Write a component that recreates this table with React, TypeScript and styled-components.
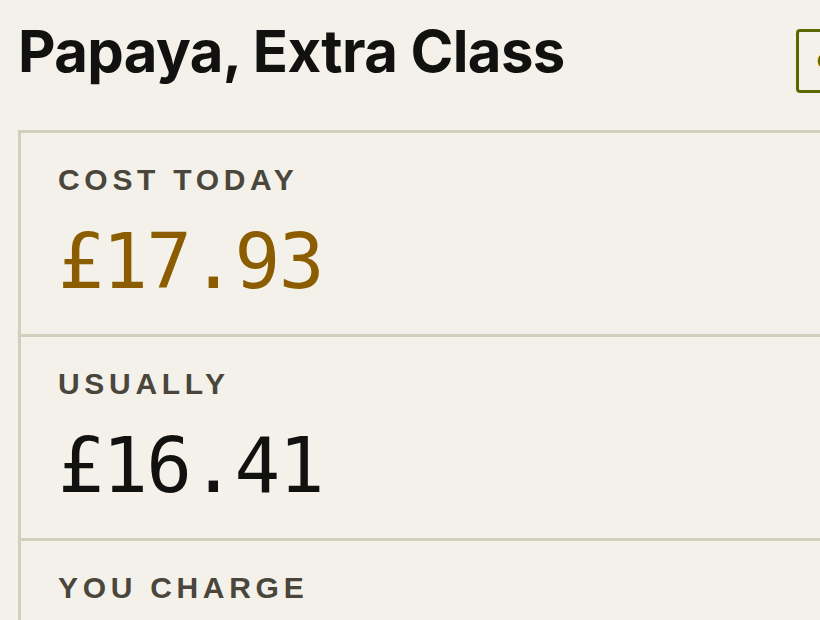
import React from "react";
import styled, { createGlobalStyle } from "styled-components";

const GlobalStyle = createGlobalStyle`
  html, body {
    margin: 0;
    padding: 0;
    background: #f3f1e9;
  }
  body {
    font-family: "Liberation Sans", Arial, sans-serif;
    overflow: hidden;
  }
`;

const Page = styled.div`
  width: 820px;
  height: 620px;
  overflow: hidden;
  box-sizing: border-box;
  padding: 19px 0 0 18px;
  background: #f3f1e9;
`;

const Header = styled.header`
  display: flex;
  align-items: flex-start;
  justify-content: space-between;
  width: 918px;
`;

const Title = styled.h1`
  margin: 0;
  font-family: Inter, Roboto, "Liberation Sans", sans-serif;
  font-weight: 700;
  font-size: 58px;
  line-height: 64px;
  letter-spacing: -0.6px;
  color: #111110;
  white-space: nowrap;
`;

const ActionButton = styled.button`
  flex: none;
  margin: 10px 0 0 0;
  width: 140px;
  height: 64px;
  box-sizing: border-box;
  padding: 0 0 0 18px;
  text-align: left;
  border: 3px solid #5a6800;
  border-radius: 4px;
  background: transparent;
  color: #5a6800;
  font-family: "Liberation Sans", Arial, sans-serif;
  font-weight: 700;
  font-size: 21px;
`;

const Card = styled.section`
  margin-top: 37px;
  width: 900px;
  border: 3px solid #d2cfbf;
  box-sizing: border-box;
`;

const Row = styled.div`
  display: flex;
  flex-direction: column;
  padding: 29px 0 33px 37px;
  border-bottom: 3px solid #d2cfbf;
`;

const Label = styled.div`
  font-family: "Liberation Sans", Arial, sans-serif;
  font-weight: 700;
  font-size: 30px;
  line-height: 36px;
  letter-spacing: 4.7px;
  color: #4a463c;
  text-transform: uppercase;
`;

const Price = styled.div<{ $accent?: boolean }>`
  margin-top: 25px;
  font-family: "DejaVu Sans Mono", "Liberation Mono", monospace;
  font-size: 76px;
  line-height: 78px;
  letter-spacing: -1.6px;
  color: ${(p) => (p.$accent ? "#8b5c00" : "#111110")};
`;

const rows = [
  { label: "Cost today", value: "£17.93", accent: true },
  { label: "Usually", value: "£16.41", accent: false },
  { label: "You charge", value: "£19.99", accent: false },
];

export default function App() {
  return (
    <>
      <GlobalStyle />
      <Page>
        <Header>
          <Title>Papaya, Extra Class</Title>
          <ActionButton>Compare</ActionButton>
        </Header>
        <Card>
          {rows.map((r) => (
            <Row key={r.label}>
              <Label>{r.label}</Label>
              <Price $accent={r.accent}>{r.value}</Price>
            </Row>
          ))}
        </Card>
      </Page>
    </>
  );
}
